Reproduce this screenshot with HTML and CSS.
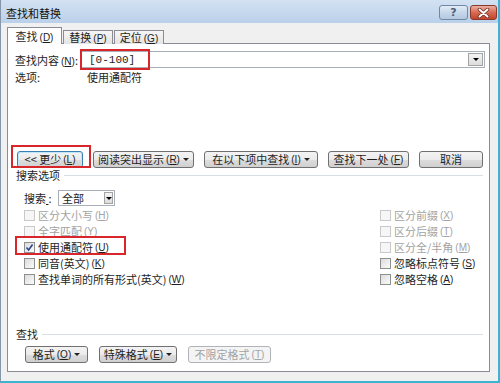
FILE: index.html
```html
<!DOCTYPE html>
<html>
<head>
<meta charset="UTF-8">
<title>查找和替换</title>
<link rel="stylesheet" href="styles.css">
</head>
<body>
<div class="window">
  <div class="titlebar">
    <div class="title">查找和替换</div>
    <div class="cap-btn help">?</div>
    <div class="cap-btn close">
      <svg width="13" height="10" viewBox="0 0 13 10"><path d="M2.5 1.5 L10.5 8.5 M10.5 1.5 L2.5 8.5" stroke="#6b2a20" stroke-width="3.6" stroke-linecap="round"/><path d="M2.5 1.5 L10.5 8.5 M10.5 1.5 L2.5 8.5" stroke="#fff" stroke-width="2" stroke-linecap="round"/></svg>
    </div>
  </div>
  <div class="client">
    <div class="tabs">
      <div class="tab active">查找<span class="key">(<u>D</u>)</span></div>
      <div class="tab">替换<span class="key">(<u>P</u>)</span></div>
      <div class="tab">定位<span class="key">(<u>G</u>)</span></div>
    </div>
    <div class="panel">
      <div class="find-row">
        <div class="find-label">查找内容<span class="key">(<u>N</u>)</span>:</div>
        <div class="combo wide">
          <span class="combo-text">[0-100]</span>
          <span class="combo-arrow"><i class="tri"></i></span>
        </div>
      </div>
      <div class="opt-row">
        <div class="opt-label">选项:</div>
        <div>使用通配符</div>
      </div>

      <div class="btn-row">
        <div class="btn focus w66">&lt;&lt; 更少<span class="key">(<u>L</u>)</span></div>
        <div class="btn w101">阅读突出显示<span class="key">(<u>R</u>)</span><i class="caret"></i></div>
        <div class="btn w114">在以下项中查找<span class="key">(<u>I</u>)</span> <i class="caret"></i></div>
        <div class="btn w81">查找下一处<span class="key">(<u>F</u>)</span></div>
        <div class="btn w64">取消</div>
      </div>

      <div class="group-head"><span>搜索选项</span><i class="rule"></i></div>
      <div class="search-row">
        <div class="search-label">搜索<u>&nbsp;</u>:</div>
        <div class="combo small">
          <span class="combo-text">全部</span>
          <span class="combo-arrow"><i class="tri"></i></span>
        </div>
      </div>

      <div class="checks">
        <div class="chk off"><i class="box"></i>区分大小写<span class="key">(<u>H</u>)</span></div>
        <div class="chk off"><i class="box"></i>区分前缀<span class="key">(<u>X</u>)</span></div>
        <div class="chk off"><i class="box"></i>全字匹配<span class="key">(<u>Y</u>)</span></div>
        <div class="chk off"><i class="box"></i>区分后缀<span class="key">(<u>T</u>)</span></div>
        <div class="chk"><i class="box"><svg width="9" height="9" viewBox="0 0 9 9"><path d="M1.5 4.5 L3.6 7 L7.6 1.5" fill="none" stroke="#2c4588" stroke-width="1.6"/></svg></i>使用通配符<span class="key">(<u>U</u>)</span></div>
        <div class="chk off"><i class="box"></i>区分全/半角<span class="key">(<u>M</u>)</span></div>
        <div class="chk"><i class="box"></i>同音(英文)<span class="key">(<u>K</u>)</span></div>
        <div class="chk"><i class="box"></i>忽略标点符号<span class="key">(<u>S</u>)</span></div>
        <div class="chk"><i class="box"></i>查找单词的所有形式(英文)<span class="key">(<u>W</u>)</span></div>
        <div class="chk"><i class="box"></i>忽略空格<span class="key">(<u>A</u>)</span></div>
      </div>

      <div class="group-head low"><span>查找</span><i class="rule"></i></div>
      <div class="btn-row bottom">
        <div class="btn w63">格式<span class="key">(<u>O</u>)</span> <i class="caret"></i></div>
        <div class="btn w78">特殊格式<span class="key">(<u>E</u>)</span><i class="caret"></i></div>
        <div class="btn disabled w83">不限定格式<span class="key">(<u>T</u>)</span></div>
      </div>

      <div class="mark m1"></div>
      <div class="mark m2"></div>
      <div class="mark m3"></div>
    </div>
  </div>
</div>
</body>
</html>
```

FILE: styles.css
```css
* { box-sizing: border-box; }
body { margin: 0; font: 11px "Noto Sans CJK SC", "Liberation Sans", sans-serif; color: #1e1e1e; }

.window { width: 500px; height: 383px; display: flex; flex-direction: column; background: #f0f0f0; border-left: 1px solid #8596ab; border-right: 2px solid #3cb3d3; border-bottom: 2px solid #3cb3d3; }

.titlebar { height: 23px; display: flex; align-items: flex-start; padding: 4px 1px 0 5px; background: linear-gradient(#d3e2f2, #bad0e9); }
.title { flex: 1; line-height: 18px; font-size: 11px; color: #111; }
.cap-btn { height: 15px; margin-top: 1px; border: 1px solid #6e88a6; border-radius: 3px; display: flex; align-items: center; justify-content: center; }
.help { width: 29px; margin-right: 2px; background: linear-gradient(#e3ecf6, #c6d7ea 50%, #b3c8e0); color: #4f5d70; font: bold 11px "DejaVu Sans", sans-serif; }
.close { width: 27px; border-color: #8a3a2c; background: linear-gradient(#eab0a3, #d86a52 50%, #c3432b); }

.client { flex: 1; padding: 4px 8px 0 6px; }

.tabs { display: flex; align-items: flex-end; height: 17px; margin-bottom: -1px; position: relative; z-index: 1; }
.tab { width: 50px; height: 14px; margin-right: 1px; border: 1px solid #898c95; border-bottom: none; background: linear-gradient(#f6f6f6, #e4e4e4); text-align: center; line-height: 13px; white-space: nowrap; }
.tab.active { width: 55px; height: 17px; background: #fff; line-height: 16px; }

.panel { position: relative; height: 329px; background: #fff; border: 1px solid #898c95; padding: 0 4px 0 7px; display: flex; flex-direction: column; }

.key { margin-left: 2px; font: 10px "Liberation Sans", sans-serif; }
.key u { text-decoration: underline; }

.find-row { display: flex; align-items: center; margin-top: 7px; height: 17px; }
.find-label { width: 66px; white-space: nowrap; }
.combo { display: flex; align-items: center; background: #fff; border: 1px solid #a9afb8; }
.combo.wide { flex: 1; height: 17px; }
.combo-text { flex: 1; padding-left: 7px; font-family: "Liberation Mono", "Noto Sans CJK SC", monospace; font-size: 11px; }
.combo.small .combo-text { padding-left: 3px; font-family: "Noto Sans CJK SC", sans-serif; }
.combo-arrow { width: 15px; height: 13px; margin-right: 1px; border: 1px solid #a3a3a3; background: linear-gradient(#f4f4f4, #dcdcdc); display: flex; align-items: center; justify-content: center; }
.tri { width: 0; height: 0; border-left: 3px solid transparent; border-right: 3px solid transparent; border-top: 3px solid #000; }

.opt-row { display: flex; margin-top: 2px; line-height: 14px; height: 14px; }
.opt-label { width: 72px; }

.btn-row { display: flex; gap: 10px; margin-top: 67px; margin-left: 2px; height: 17px; }
.btn { height: 17px; border: 1px solid #707070; border-radius: 3px; background: linear-gradient(#f3f3f3, #ebebeb 50%, #dddddd 51%, #d0d0d0); display: flex; align-items: center; justify-content: center; line-height: 15px; white-space: nowrap; }
.btn.focus { border-color: #3c7fb1; box-shadow: inset 0 0 0 1px #bfe6fa; }
.btn.disabled { border-color: #b0b4b8; background: #f4f4f4; color: #a3a3a3; }
.caret { width: 0; height: 0; margin-left: 3px; border-left: 3px solid transparent; border-right: 3px solid transparent; border-top: 3px solid #222; }
.w66 { width: 66px; } .w101 { width: 101px; } .w114 { width: 114px; } .w81 { width: 81px; } .w64 { width: 64px; }
.w63 { width: 63px; } .w78 { width: 78px; } .w83 { width: 83px; }

.group-head { display: flex; align-items: center; height: 14px; line-height: 14px; margin-left: 1px; margin-right: 2px; }
.group-head .rule { flex: 1; height: 1px; background: #d5dfe6; margin-left: 4px; }
.group-head.low { margin-top: 40px; }

.search-row { display: flex; align-items: center; margin-top: 8px; padding-left: 9px; height: 16px; }
.search-label { width: 34px; }
.combo.small { width: 57px; height: 16px; }
.combo.small .combo-arrow { width: 9px; height: 12px; }

.checks { display: grid; grid-template-columns: 356px 1fr; grid-auto-rows: 16px; margin-top: 1px; padding-left: 9px; }
.chk { display: flex; align-items: center; white-space: nowrap; }
.chk.off { color: #a3a3a3; }
.box { width: 11px; height: 11px; margin-right: 3px; border: 1px solid #8e8f8f; background: linear-gradient(135deg, #dcdcdc, #fbfbfb); display: flex; align-items: center; justify-content: center; }
.chk.off .box { border-color: #c9c9c9; background: #f6f6f6; }

.btn-row.bottom { margin-top: 5px; margin-left: 10px; gap: 11px; }

.mark { position: absolute; border: 2px solid #d8262b; }
.m1 { left: 72px; top: 5px; width: 70px; height: 21px; }
.m2 { left: 3px; top: 101px; width: 80px; height: 23px; }
.m3 { left: 7px; top: 192px; width: 111px; height: 19px; }
```
